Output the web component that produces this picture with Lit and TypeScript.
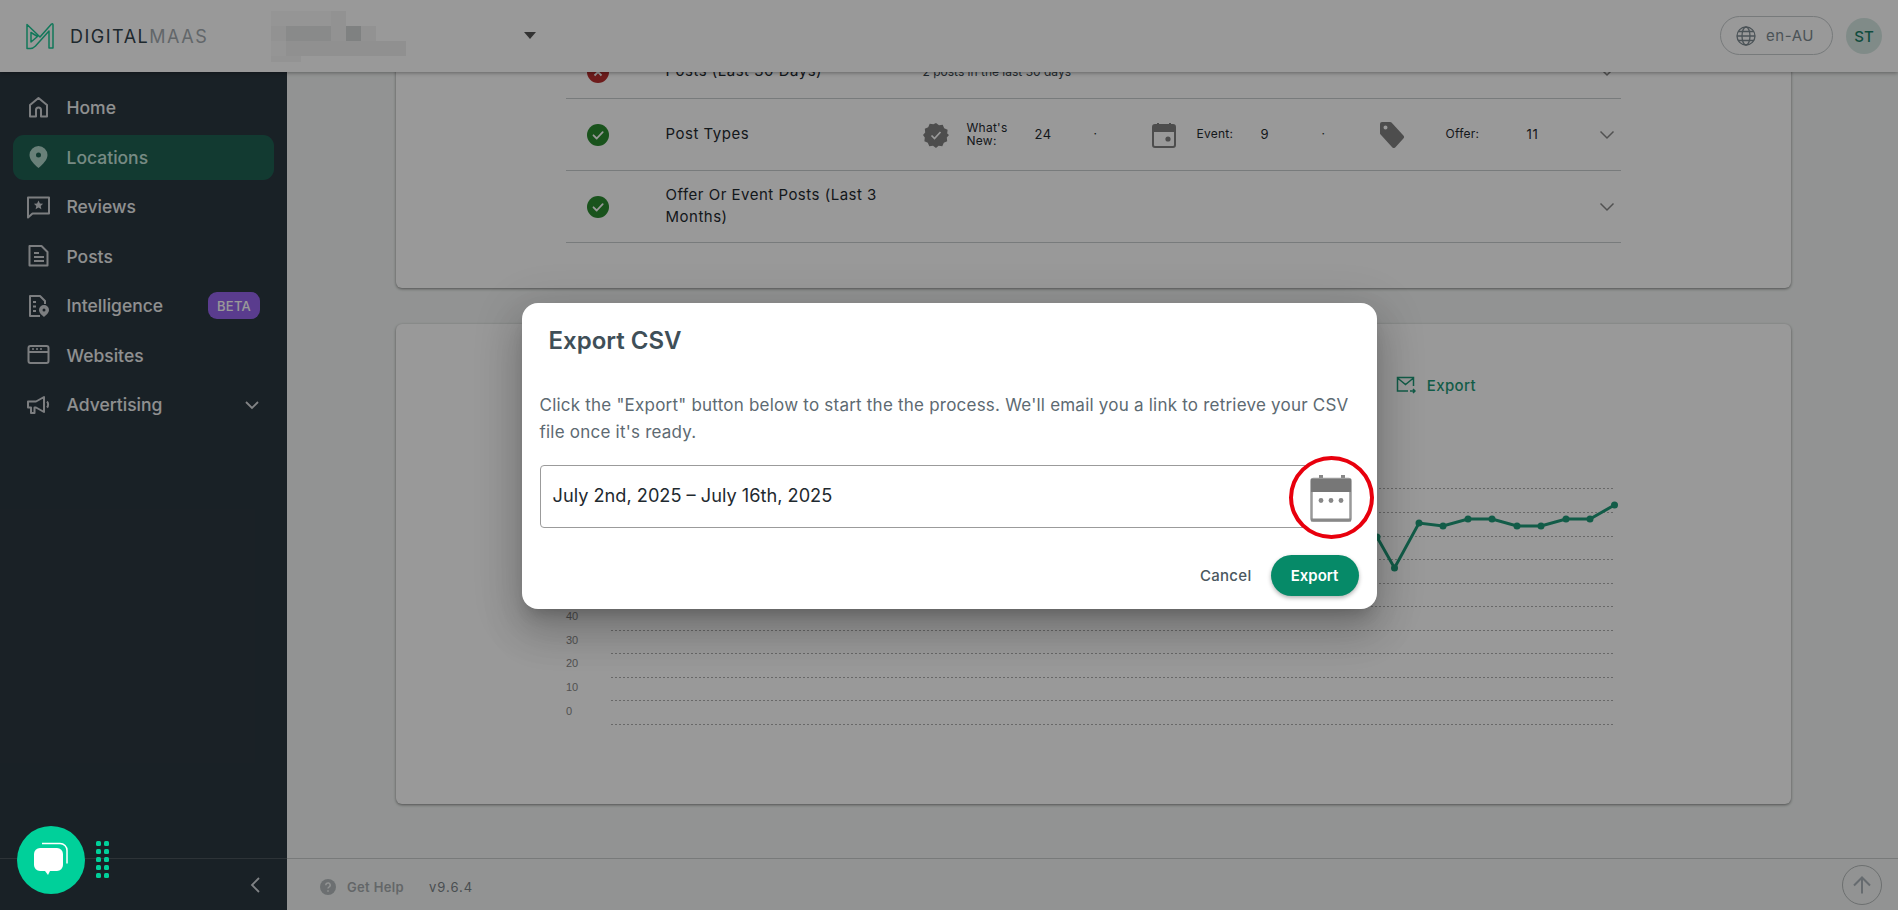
import { LitElement, html, css, svg } from "lit";
import { customElement } from "lit/decorators.js";

const FONT = css`Inter, "Noto Sans", sans-serif`;

const check = svg`<path d="M6.5 11.3l3.2 3.2 6-6.4" fill="none" stroke="#fff" stroke-width="1.8" stroke-linecap="round" stroke-linejoin="round"/>`;
const chevron = html`<svg class="chev" width="16" height="10" viewBox="0 0 16 10"><path d="M1.5 1.5L8 8l6.5-6.5" fill="none" stroke="#888" stroke-width="1.5"/></svg>`;

const navIcons: Record<string, unknown> = {
  home: svg`<path d="M12.5 3L4 10v11.5h6v-6.5a2.5 2.5 0 015 0v6.5h6V10z" fill="none" stroke="currentColor" stroke-width="2" stroke-linejoin="round"/>`,
  pin: svg`<path fill-rule="evenodd" d="M12.5 2a9 9 0 00-9 9c0 5 5 9.500 9 13 4-3.500 9-8 9-13a9 9 0 00-9-9zm0 6.500a2.500 2.500 0 110 5 2.500 2.500 0 010-5z" fill="currentColor"/>`,
  review: svg`<path d="M2 3.500h21v16H6.500L2 23.500z" fill="none" stroke="currentColor" stroke-width="2" stroke-linejoin="round"/><path d="M12.500 6.500l1.400 3 3.200.3-2.400 2.200.7 3.200-2.900-1.700-2.900 1.700.7-3.200-2.400-2.200 3.200-.3z" fill="currentColor"/>`,
  post: svg`<path d="M3.500 3h12l6 6v13.500h-18z" fill="none" stroke="currentColor" stroke-width="2" stroke-linejoin="round"/><path d="M8 10h5M8 14h10M8 18h10" stroke="currentColor" stroke-width="2"/>`,
  intel: svg`<path d="M14 23H4V3h10l5 5v3" fill="none" stroke="currentColor" stroke-width="2" stroke-linejoin="round"/><path d="M7 9h3M7 13.500h3M7 18h3" stroke="currentColor" stroke-width="2"/><path fill-rule="evenodd" d="M18 12a5 5 0 00-5 5c0 3 3 5 5 7 2-2 5-4 5-7a5 5 0 00-5-5zm0 3.500a1.500 1.500 0 110 3 1.500 1.500 0 010-3z" fill="currentColor"/>`,
  web: svg`<rect x="2.500" y="4" width="20" height="17" rx="2" fill="none" stroke="currentColor" stroke-width="2"/><path d="M2.500 10h20" stroke="currentColor" stroke-width="2"/><path d="M6 7h2M10 7h2M14 7h2" stroke="currentColor" stroke-width="1.600"/>`,
  ad: svg`<path d="M2 9.500h8L18 5v15l-8-4.500H8.500V21H5v-5.500H2z" fill="none" stroke="currentColor" stroke-width="2" stroke-linejoin="round"/><path d="M21 9.500c1.500 1.500 1.500 4.500 0 6" fill="none" stroke="currentColor" stroke-width="2"/>`,
};

const nav = [
  { label: "Home", icon: "home" },
  { label: "Locations", icon: "pin", active: true },
  { label: "Reviews", icon: "review" },
  { label: "Posts", icon: "post" },
  { label: "Intelligence", icon: "intel", badge: "BETA" },
  { label: "Websites", icon: "web" },
  { label: "Advertising", icon: "ad", caret: true },
];

const gridYs = [488, 512, 536, 559, 583, 606, 630, 653, 677, 700, 724];
const pts = [
  [1320, 520], [1377, 537], [1394.5, 568], [1419, 523], [1443, 526], [1468, 519], [1492, 519],
  [1517, 526], [1541, 526], [1566, 519], [1590, 519], [1614.5, 505],
];

@customElement("app-root")
export class AppRoot extends LitElement {
  static styles = css`
    :host {
      display: block;
      position: relative;
      height: 100vh;
      overflow: hidden;
      font-family: ${FONT};
      color: #2f3b42;
    }
    .page { display: flex; flex-direction: column; height: 100%; }
    header {
      flex: 0 0 72px;
      display: flex;
      align-items: center;
      background: #fff;
      box-shadow: 0 1px 4px rgba(0, 0, 0, 0.35);
      position: relative;
      z-index: 2;
      padding: 0 16px 0 26px;
    }
    .logo-text { margin-left: 16px; font-size: 18px; letter-spacing: 1.5px; color: #33434c; width: 184px; white-space: nowrap; }
    .logo-text span { color: #a3abb0; }
    .blur { margin-left: 17px; display: block; }
    .caret { margin-left: 118px; margin-top: -2px; width: 0; height: 0; border: 6px solid transparent; border-top: 7px solid #555; border-bottom: 0; }
    .spacer { flex: 1; }
    .lang {
      display: flex; align-items: center; gap: 10px; box-sizing: border-box;
      width: 113px; height: 39px; margin-top: -1px; padding-left: 15px;
      border: 1px solid #c6cbcd; border-radius: 20px;
      font-size: 15px; letter-spacing: 0.55px; color: #7e8b92;
    }
    .avatar {
      margin-left: 13px; width: 36px; height: 36px; border-radius: 50%;
      background: #d6e8e3; color: #1c8068; font-size: 15px; font-weight: 500;
      display: flex; align-items: center; justify-content: center;
    }
    .body { flex: 1; display: flex; min-height: 0; }
    aside {
      flex: 0 0 287px; background: #2b3740; display: flex; flex-direction: column;
      padding-top: 13px; box-sizing: border-box; position: relative;
    }
    .nav-item {
      display: flex; align-items: center; height: 45px; margin: 0 13px 4.5px; padding: 0 14px 0 13px;
      border-radius: 11px; color: #eef0f1; font-size: 17.5px; font-weight: 500;
      box-sizing: border-box;
    }
    .nav-item svg.ic { flex: 0 0 25px; margin-right: 15.5px; color: #cfd3d6; }
    .nav-item.active { background: #1e6153; color: #c7e6dc; }
    .nav-item.active svg.ic { color: #b0d5ca; }
    .nav-item .grow { flex: 1; }
    .badge {
      background: #9665ed; color: #fff; font-size: 13px; font-weight: 500; letter-spacing: .3px;
      width: 52px; height: 27px; border-radius: 9px; display: flex; align-items: center; justify-content: center;
    }
    .side-foot {
      margin-top: auto; height: 52px; border-top: 1px solid #4b555c; box-sizing: border-box;
      display: flex; align-items: center; justify-content: flex-end; padding-right: 26px;
    }
    main { flex: 1; display: flex; flex-direction: column; min-width: 0; background: #f3f6f5; }
    .scroll { flex: 1; overflow: hidden; padding: 0 107px 0 109px; min-height: 0; }
    .card { background: #fff; border-radius: 6px; box-shadow: 0 1px 3px rgba(0, 0, 0, 0.45); }
    .card1 { margin-top: -45px; padding: 0 170px 45px; }
    .row {
      height: 72px; box-sizing: border-box; border-bottom: 1px solid #c9cdcf;
      display: flex; align-items: center; position: relative;
    }
    .row.first { padding-top: 18px; }
    .row.first .chev { margin-top: 4px; }
    .status { flex: 0 0 100px; padding-left: 21px; box-sizing: border-box; display: flex; }
    .title { flex: 0 0 257px; font-size: 15px; line-height: 22px; font-weight: 400; letter-spacing: .5px; color: #1f2a30; box-sizing: border-box; padding: 0 30px 1px 0; margin-left: -.5px; }
    .metrics {
      flex: 1; display: grid; align-items: center; font-size: 12px; line-height: 12.500px; color: #1f2a30;
      grid-template-columns: 44px 68px 59px 57px 46px 64px 61px 57px 67px 81px 1fr;
    }
    .metrics .lbl { font-weight: 400; letter-spacing: .25px; }
    .metrics .val { font-size: 13px; letter-spacing: .6px; font-weight: 400; }
    .plain { flex: 1; font-size: 12px; color: #3a464d; }
    .chev { position: absolute; right: 6px; top: 50%; margin-top: -5px; }
    .card2 { margin-top: 36px; height: 480px; box-sizing: border-box; padding: 48px 0 0 170px; }
    .exp {
      display: flex; justify-content: flex-end; align-items: center; gap: 11px; height: 26px; padding-right: 315px;
      font-size: 15px; font-weight: 500; letter-spacing: .4px; color: #1f9a78;
    }
    .chart { display: block; margin-top: 82px; overflow: visible; }
    .chart text { font: 11px "Liberation Sans", sans-serif; fill: #888; }
    footer {
      flex: 0 0 52px; box-sizing: border-box; border-top: 1px solid #c8cbcb;
      display: flex; align-items: center; padding-left: 33px; padding-top: 4px; position: relative;
      font-size: 13px; color: #a6abae;
    }
    .help { margin-left: 11px; font-weight: 600; letter-spacing: .35px; }
    .ver { margin-left: 25px; letter-spacing: 1px; color: #7b8287; }
    .top-btn {
      position: absolute; right: 16px; top: 6px; width: 40px; height: 40px; box-sizing: border-box;
      border-radius: 50%; border: 1px solid #b5b9ba; display: flex; align-items: center; justify-content: center;
    }
    .overlay {
      position: absolute; inset: 0; z-index: 5; background: rgba(0, 0, 0, 0.4);
      display: flex; align-items: center; justify-content: center;
    }
    .modal {
      width: 855px; height: 306px; margin-top: 2px; box-sizing: border-box; background: #fff; border-radius: 16px;
      padding: 0 18px; display: flex; flex-direction: column;
      box-shadow: 0 11px 15px -7px rgba(0, 0, 0, 0.2), 0 24px 38px 3px rgba(0, 0, 0, 0.14), 0 9px 46px 8px rgba(0, 0, 0, 0.12);
    }
    h2 { margin: 22px 0 0 9px; font-size: 24px; line-height: 32px; font-weight: 600; color: #3f4f58; }
    .modal p { margin: 35px 0 0; font-size: 17px; letter-spacing: .22px; line-height: 27px; color: #5d6a72; }
    .field {
      position: relative; margin-top: 19px; height: 63px; box-sizing: border-box; border: 1px solid #9b9b9b; border-radius: 4px;
      display: flex; align-items: center; padding: 0 0 3px 12px; font-size: 18.2px; color: #1f2a30;
    }
    .ring {
      position: absolute; right: -16px; top: -10px; width: 85px; height: 83px; box-sizing: border-box;
      border: 4.5px solid #e8000d; border-radius: 50%; background: #fff;
      display: flex; align-items: center; justify-content: center;
    }
    .actions { display: flex; justify-content: flex-end; align-items: center; margin-top: 27px; }
    .cancel { font-size: 15px; font-weight: 500; letter-spacing: .3px; color: #4a5860; margin-right: 19px; }
    .primary {
      width: 88px; height: 41px; border-radius: 21px; background: #068a68; color: #fff; font-size: 15px; font-weight: 600;
      display: flex; align-items: center; justify-content: center; box-shadow: 0 2px 4px rgba(0, 0, 0, 0.3);
    }
    .chat {
      position: absolute; z-index: 6; left: 17px; bottom: 16px; width: 68px; height: 68px; border-radius: 50%;
      background: #00d09a; display: flex; align-items: center; justify-content: center;
    }
    .dots {
      position: absolute; z-index: 6; left: 96px; bottom: 32px; display: grid;
      grid-template-columns: 5px 5px; gap: 3px; 
    }
    .dots i { width: 5px; height: 5px; background: #00d09a; border-radius: 1.500px; }
  `;

  private statusIcon(ok: boolean) {
    return html`<svg width="22" height="22" viewBox="0 0 22 22">
      <circle cx="11" cy="11" r="11" fill=${ok ? "#2b8a30" : "#b83030"} />
      ${ok ? check : svg`<path d="M7.500 7.500l7 7M14.500 7.500l-7 7" stroke="#fff" stroke-width="1.800"/>`}
    </svg>`;
  }

  render() {
    return html`
      <div class="page">
        <header>
          <svg width="28" height="28" viewBox="0 0 28 28">
            <path d="M1 2.500L14 15 25.500 2Q27 1 27 3V26H23V9L9.500 24Q7 26.500 4.500 26.500H1Z M5 10.500V20L11.500 14.500Z" fill="none" stroke="#1fc796" stroke-width="1.500" stroke-linejoin="round"/>
          </svg>
          <div class="logo-text">DIGITAL<span>MAAS</span></div>
          <svg class="blur" width="135" height="51" viewBox="0 0 135 51">
            <rect x="0" y="0" width="60" height="15" fill="#f8f8f8" />
            <rect x="60" y="0" width="15" height="15" fill="#f3f3f3" />
            <rect x="0" y="15" width="105" height="15" fill="#f3f3f3" />
            <rect x="15" y="15" width="45" height="15" fill="#e4e6e6" />
            <rect x="75" y="15" width="15" height="15" fill="#d4d8d8" />
            <rect x="0" y="30" width="135" height="15" fill="#f8f8f8" />
            <rect x="15" y="30" width="120" height="15" fill="#f0f0f0" />
            <rect x="0" y="45" width="30" height="6" fill="#f6f6f6" />
          </svg>
          <div class="caret"></div>
          <div class="spacer"></div>
          <div class="lang">
            <svg width="20" height="20" viewBox="0 0 20 20" fill="none" stroke="#7e8b92" stroke-width="1.300">
              <circle cx="10" cy="10" r="9" /><ellipse cx="10" cy="10" rx="4" ry="9" /><path d="M1 10h18M2.200 5.500h15.600M2.200 14.500h15.600" />
            </svg>
            en-AU
          </div>
          <div class="avatar">ST</div>
        </header>
        <div class="body">
          <aside>
            ${nav.map(
              (n) => html`<div class="nav-item ${n.active ? "active" : ""}">
                <svg class="ic" width="25" height="26" viewBox="0 0 25 26">${navIcons[n.icon]}</svg>
                <span>${n.label}</span>
                <span class="grow"></span>
                ${n.badge ? html`<span class="badge">${n.badge}</span>` : ""}
                ${n.caret
                  ? html`<svg width="16" height="10" viewBox="0 0 16 10"><path d="M2 2l6 6 6-6" fill="none" stroke="#d9dcde" stroke-width="1.800"/></svg>`
                  : ""}
              </div>`
            )}
            <div class="side-foot">
              <svg width="12" height="18" viewBox="0 0 12 18"><path d="M10 2L3 9l7 7" fill="none" stroke="#d4dade" stroke-width="1.800"/></svg>
            </div>
          </aside>
          <main>
            <div class="scroll">
              <div class="card card1">
                <div class="row first">
                  <div class="status">${this.statusIcon(false)}</div>
                  <div class="title">Posts (Last 30 Days)</div>
                  <div class="plain">2 posts in the last 30 days</div>
                  ${chevron}
                </div>
                <div class="row">
                  <div class="status">${this.statusIcon(true)}</div>
                  <div class="title">Post Types</div>
                  <div class="metrics">
                    <svg width="26" height="26" viewBox="0 0 26 26">
                      <path d="M13 1l3 2.200 3.700-.4 1.500 3.400 3.400 1.500-.4 3.700L26 13l-2.200 2.600.4 3.700-3.400 1.500-1.500 3.400-3.700-.4L13 26l-3-2.200-3.700.4-1.500-3.400-3.400-1.500.4-3.700L0 13l2.200-2.600-.4-3.700 3.400-1.500 1.500-3.400 3.700.4z" fill="#808080"/>
                      <path d="M8.500 13.500l3 3 6-6.500" fill="none" stroke="#fff" stroke-width="1.700"/>
                    </svg>
                    <span class="lbl">What's<br />New:</span><span class="val">24</span><span>·</span>
                    <svg width="26" height="26" viewBox="0 0 26 26">
                      <path d="M4 3h18a2 2 0 012 2v18a2 2 0 01-2 2H4a2 2 0 01-2-2V5a2 2 0 012-2z" fill="none" stroke="#808080" stroke-width="2"/>
                      <path d="M3 3h20v7H3z" fill="#808080"/><path d="M7 1v3M19 1v3" stroke="#808080" stroke-width="2"/><circle cx="17" cy="17" r="2.600" fill="#808080"/>
                    </svg>
                    <span class="lbl">Event:</span><span class="val">9</span><span>·</span>
                    <svg width="26" height="26" viewBox="-1 0 26 26">
                      <path fill-rule="evenodd" d="M2 0h8a2 2 0 011.500.6l11.900 13a2 2 0 010 2.800l-8.200 9a2 2 0 01-2.800 0L.6 12.600A2 2 0 010 11V2a2 2 0 012-2zm3.500 3.500a2 2 0 100 4 2 2 0 000-4z" fill="#808080"/>
                    </svg>
                    <span class="lbl">Offer:</span><span class="val">11</span><span></span>
                  </div>
                  ${chevron}
                </div>
                <div class="row">
                  <div class="status">${this.statusIcon(true)}</div>
                  <div class="title">Offer Or Event Posts (Last 3 Months)</div>
                  ${chevron}
                </div>
              </div>
              <div class="card card2">
                <div class="exp">
                  <svg width="20" height="18" viewBox="0 0 20 18" fill="none" stroke="#1f9a78" stroke-width="1.500">
                    <path d="M12 15H1.500V1.500h16V10M1.500 2l8 6.500 8-6.500M14 15h5M17 13l2 2-2 2" />
                  </svg>
                  Export
                </div>
                <svg class="chart" width="1054" height="260" viewBox="566 480 1054 260">
                  ${gridYs.map(
                    (y) => svg`<line x1="611" x2="1615" y1=${y + 0.5} y2=${y + 0.5} stroke="#adadad" stroke-width="1" stroke-dasharray="2 2"/>`
                  )}
                  ${[40, 30, 20, 10, 0].map(
                    (v, i) => svg`<text x="566" y=${620 + i * 23.7}>${v}</text>`
                  )}
                  <polyline points=${pts.map((p) => p.join(",")).join(" ")} fill="none" stroke="#1f9a78" stroke-width="3"/>
                  ${pts.map((p) => svg`<circle cx=${p[0]} cy=${p[1]} r="3.500" fill="#1f9a78"/>`)}
                </svg>
              </div>
            </div>
            <footer>
              <svg width="16" height="16" viewBox="0 0 16 16"><circle cx="8" cy="8" r="8" fill="#b4babd"/><path d="M5.800 6.200a2.200 2.200 0 114 1.200c-.8.800-1.800 1-1.800 2.200M8 11.300v1.500" fill="none" stroke="#f3f6f5" stroke-width="1.500"/></svg>
              <span class="help">Get Help</span>
              <span class="ver">v9.6.4</span>
              <div class="top-btn">
                <svg width="20" height="20" viewBox="0 0 20 20"><path d="M10 18.500V2.500M2 10.500l8-8 8 8" fill="none" stroke="#aab2ba" stroke-width="2"/></svg>
              </div>
            </footer>
          </main>
        </div>
      </div>
      <div class="overlay">
        <div class="modal">
          <h2>Export CSV</h2>
          <p>Click the "Export" button below to start the the process. We'll email you a link to retrieve your CSV file once it's ready.</p>
          <div class="field">
            July 2nd, 2025 – July 16th, 2025
            <div class="ring">
              <svg width="42" height="48" viewBox="0 0 42 48">
                <path d="M11 1v5M33 1v5" stroke="#888" stroke-width="4"/>
                <rect x="1.500" y="5" width="39" height="41.500" rx="2" fill="#fff" stroke="#999" stroke-width="2.500"/>
                <path d="M1 5h40v13H1z" fill="#777"/><path d="M1 44.500h40v3H1z" fill="#888"/>
                <circle cx="11" cy="26.500" r="2.400" fill="#888"/><circle cx="21" cy="26.500" r="2.400" fill="#888"/><circle cx="31" cy="26.500" r="2.400" fill="#888"/>
              </svg>
            </div>
          </div>
          <div class="actions">
            <span class="cancel">Cancel</span>
            <div class="primary">Export</div>
          </div>
        </div>
      </div>
      <div class="chat">
        <svg width="36" height="38" viewBox="0 0 36 38">
          <path d="M9 2.500h18a7 7 0 017 7v13" fill="none" stroke="#fff" stroke-width="1.500"/>
          <path d="M7 7h17a6 6 0 016 6v11a6 6 0 01-6 6h-7l-2 4-3-4H7a6 6 0 01-6-6V13a6 6 0 016-6z" fill="#fff"/>
        </svg>
      </div>
      <div class="dots">${Array.from({ length: 10 }, () => html`<i></i>`)}</div>
    `;
  }
}
